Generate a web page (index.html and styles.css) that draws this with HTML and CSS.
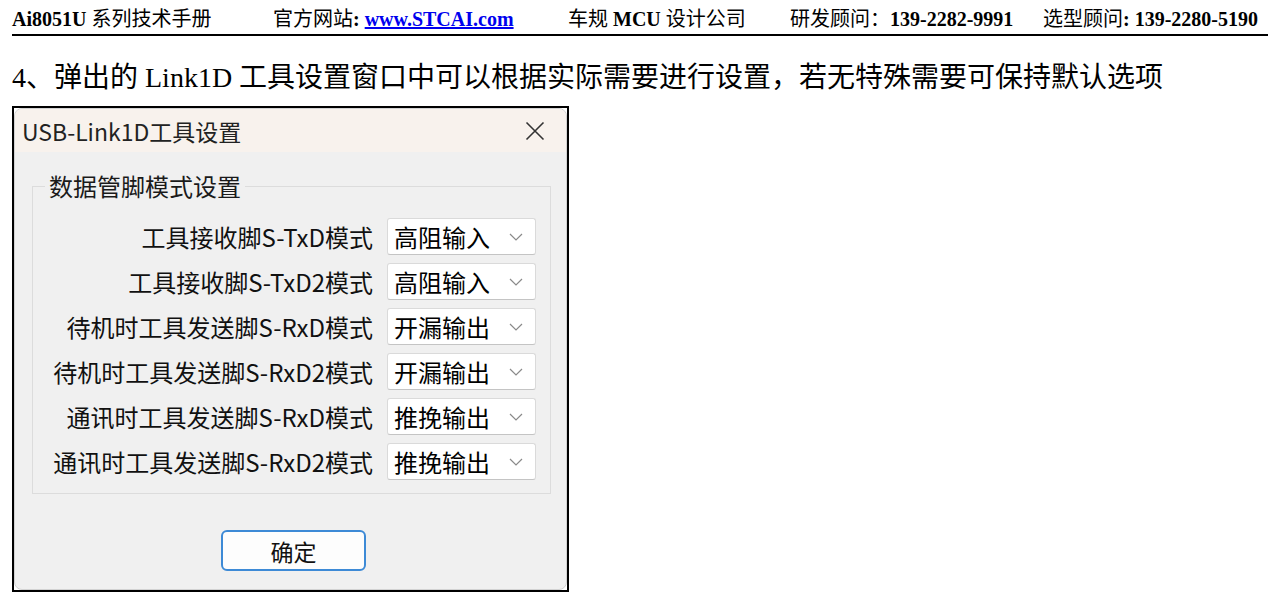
FILE: index.html
```html
<!DOCTYPE html>
<html lang="zh-CN">
  <head>
    <meta charset="UTF-8" />
    <title>Ai8051U 系列技术手册</title>
    <link rel="stylesheet" href="styles.css">
  </head>
  <body>
    <div class="doc-header">
      <span class="hd-item"><b>Ai8051U</b> 系列技术手册</span>
      <span class="hd-item">官方网站<b>: </b><a class="hd-link" href="#">www.STCAI.com</a></span>
      <span class="hd-item">车规 <b>MCU</b> 设计公司</span>
      <span class="hd-item">研发顾问：<b>139-2282-9991</b></span>
      <span class="hd-item">选型顾问<b>: 139-2280-5190</b></span>
    </div>

    <p class="step-text">4、弹出的 Link1D 工具设置窗口中可以根据实际需要进行设置，若无特殊需要可保持默认选项</p>

    <div class="shot-frame">
      <div class="dialog">
        <div class="dialog-title">
          <span>USB-Link1D工具设置</span>
          <svg class="close-icon" width="20" height="20" viewBox="0 0 20 20">
            <path d="M1.5 1.5 L18.5 18.5 M18.5 1.5 L1.5 18.5" stroke="#333" stroke-width="1.6" fill="none" />
          </svg>
        </div>
        <div class="dialog-body">
          <fieldset class="pin-group">
            <legend>数据管脚模式设置</legend>

            <div class="pin-row">
              <label class="pin-label">工具接收脚S-TxD模式</label>
              <div class="combo"><span>高阻输入</span><svg class="chev" width="14" height="8" viewBox="0 0 14 8"><path d="M1 1 L7 7 L13 1" stroke="#8a8a8a" stroke-width="1.2" fill="none"/></svg></div>
            </div>
            <div class="pin-row">
              <label class="pin-label">工具接收脚S-TxD2模式</label>
              <div class="combo"><span>高阻输入</span><svg class="chev" width="14" height="8" viewBox="0 0 14 8"><path d="M1 1 L7 7 L13 1" stroke="#8a8a8a" stroke-width="1.2" fill="none"/></svg></div>
            </div>
            <div class="pin-row">
              <label class="pin-label">待机时工具发送脚S-RxD模式</label>
              <div class="combo"><span>开漏输出</span><svg class="chev" width="14" height="8" viewBox="0 0 14 8"><path d="M1 1 L7 7 L13 1" stroke="#8a8a8a" stroke-width="1.2" fill="none"/></svg></div>
            </div>
            <div class="pin-row">
              <label class="pin-label">待机时工具发送脚S-RxD2模式</label>
              <div class="combo"><span>开漏输出</span><svg class="chev" width="14" height="8" viewBox="0 0 14 8"><path d="M1 1 L7 7 L13 1" stroke="#8a8a8a" stroke-width="1.2" fill="none"/></svg></div>
            </div>
            <div class="pin-row">
              <label class="pin-label">通讯时工具发送脚S-RxD模式</label>
              <div class="combo"><span>推挽输出</span><svg class="chev" width="14" height="8" viewBox="0 0 14 8"><path d="M1 1 L7 7 L13 1" stroke="#8a8a8a" stroke-width="1.2" fill="none"/></svg></div>
            </div>
            <div class="pin-row">
              <label class="pin-label">通讯时工具发送脚S-RxD2模式</label>
              <div class="combo"><span>推挽输出</span><svg class="chev" width="14" height="8" viewBox="0 0 14 8"><path d="M1 1 L7 7 L13 1" stroke="#8a8a8a" stroke-width="1.2" fill="none"/></svg></div>
            </div>
          </fieldset>

          <div class="btn-row">
            <button type="button" class="ok-button">确定</button>
          </div>
        </div>
      </div>
    </div>
  </body>
</html>
```

FILE: styles.css
```css
/* Page */
body {
  margin: 0;
  background: #fff;
  color: #000;
  font-family: "Liberation Serif", "Noto Sans CJK SC", serif;
}

/* Manual page header */
.doc-header {
  margin-left: 12px;
  padding-top: 7px;
  height: 27px;
  display: grid;
  grid-template-columns: 261px 295px 222px 253px auto;
  font-size: 20px;
  line-height: 24px;
  border-bottom: 2px solid #000;
  white-space: nowrap;
}

.hd-link {
  color: #0000ee;
  font-weight: bold;
}

/* Step sentence */
.step-text {
  margin: 26px 0 12px 12px;
  font-size: 28px;
  line-height: 32px;
  white-space: nowrap;
}

/* Screenshot frame */
.shot-frame {
  margin-left: 12px;
  width: 557px;
  height: 486px;
  box-sizing: border-box;
  border: 2px solid #000;
  background: #fff;
}

.dialog {
  height: 100%;
  box-sizing: border-box;
  border: 1px solid #d2d2d2;
  border-radius: 8px;
  background: #f0f0f0;
  overflow: hidden;
  font-family: "Noto Sans CJK SC", "Noto Sans", sans-serif;
  color: #111;
}

.dialog-title {
  height: 43px;
  background: #f8f2ed;
  display: flex;
  align-items: center;
  justify-content: space-between;
  padding: 0 21px 0 7px;
  font-size: 23px;
  color: #222;
}

.dialog-body {
  padding: 18px 15px 0 17px;
}

/* Group box */
.pin-group {
  margin: 0;
  padding: 16px 14px 13px 12px;
  border: 1px solid #dcdcdc;
  display: flex;
  flex-direction: column;
  gap: 8px;
}

.pin-group legend {
  padding: 0 4px;
  font-size: 24px;
  line-height: 32px;
  color: #1a1a1a;
}

.pin-row {
  display: flex;
  justify-content: flex-end;
  align-items: center;
  height: 37px;
}

.pin-label {
  margin-right: 14px;
  font-size: 24px;
  color: #111;
  white-space: nowrap;
}

/* Combo boxes */
.combo {
  width: 149px;
  height: 37px;
  box-sizing: border-box;
  display: flex;
  align-items: center;
  justify-content: space-between;
  padding: 0 12px 0 6px;
  background: #fff;
  border: 1px solid #dadada;
  border-bottom-color: #c4c4c4;
  border-radius: 3px;
  font-size: 24px;
  color: #000;
}

/* OK button */
.btn-row {
  display: flex;
  justify-content: center;
  padding: 36px 0 0 4px;
}

.ok-button {
  width: 145px;
  height: 41px;
  background: #fdfdfd;
  border: 2px solid #3d8ad6;
  border-radius: 6px;
  font-family: "Noto Sans CJK SC", sans-serif;
  font-size: 23px;
  color: #111;
  cursor: pointer;
}
```
